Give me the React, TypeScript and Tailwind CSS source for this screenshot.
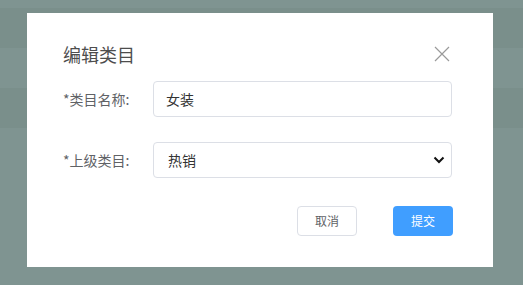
import React from "react";

export default function App() {
  const font = { fontFamily: '"Noto Sans CJK SC", "Noto Sans", sans-serif' };
  return (
    <div className="relative w-[523px] h-[285px] overflow-hidden bg-[#7f9491]" style={font}>
      <div className="flex flex-col">
        <div className="h-[8px] bg-[#7f9491]" />
        <div className="h-[40px] bg-[#7a8f8b]" />
        <div className="h-[40px] bg-[#7f9491]" />
        <div className="h-[40px] bg-[#7a8f8b]" />
      </div>
      <div className="absolute left-[27px] top-[13px] w-[466px] h-[254px] bg-white pl-[36px] pr-[41px] pt-[29px]">
        <div className="flex items-center justify-between h-[24px]">
          <span className="text-[18px] leading-[24px] text-[#4d4d4d]">编辑类目</span>
          <svg width="16" height="16" viewBox="0 0 16 16" className="mr-[2px]">
            <path d="M1 1 L15 15 M15 1 L1 15" stroke="#9a9a9a" strokeWidth="1.2" fill="none" />
          </svg>
        </div>
        <div className="mt-[15px] flex items-center">
          <span className="w-[90px] text-[14px] text-[#606266]">*类目名称:</span>
          <div className="flex-1 h-[36px] border border-[#dcdfe6] rounded-[4px] flex items-center pl-[12px] text-[14px] text-[#333]">
            女装
          </div>
        </div>
        <div className="mt-[25px] flex items-center">
          <span className="w-[90px] text-[14px] text-[#606266]">*上级类目:</span>
          <div className="flex-1 h-[36px] border border-[#dcdfe6] rounded-[4px] flex items-center justify-between pl-[14px] pr-[6px] text-[14px] text-[#333]">
            <span>热销</span>
            <svg width="12" height="8" viewBox="0 0 12 8">
              <path d="M1.5 1.5 L6 6 L10.5 1.5" stroke="#111" strokeWidth="2" fill="none" />
            </svg>
          </div>
        </div>
        <div className="mt-[28px] -mr-[1px] flex justify-end gap-[36px]">
          <button className="w-[60px] h-[30px] border border-[#dcdfe6] rounded-[4px] bg-white text-[12px] text-[#606266]">
            取消
          </button>
          <button className="w-[60px] h-[30px] rounded-[4px] bg-[#409eff] text-[12px] text-white">
            提交
          </button>
        </div>
      </div>
    </div>
  );
}
